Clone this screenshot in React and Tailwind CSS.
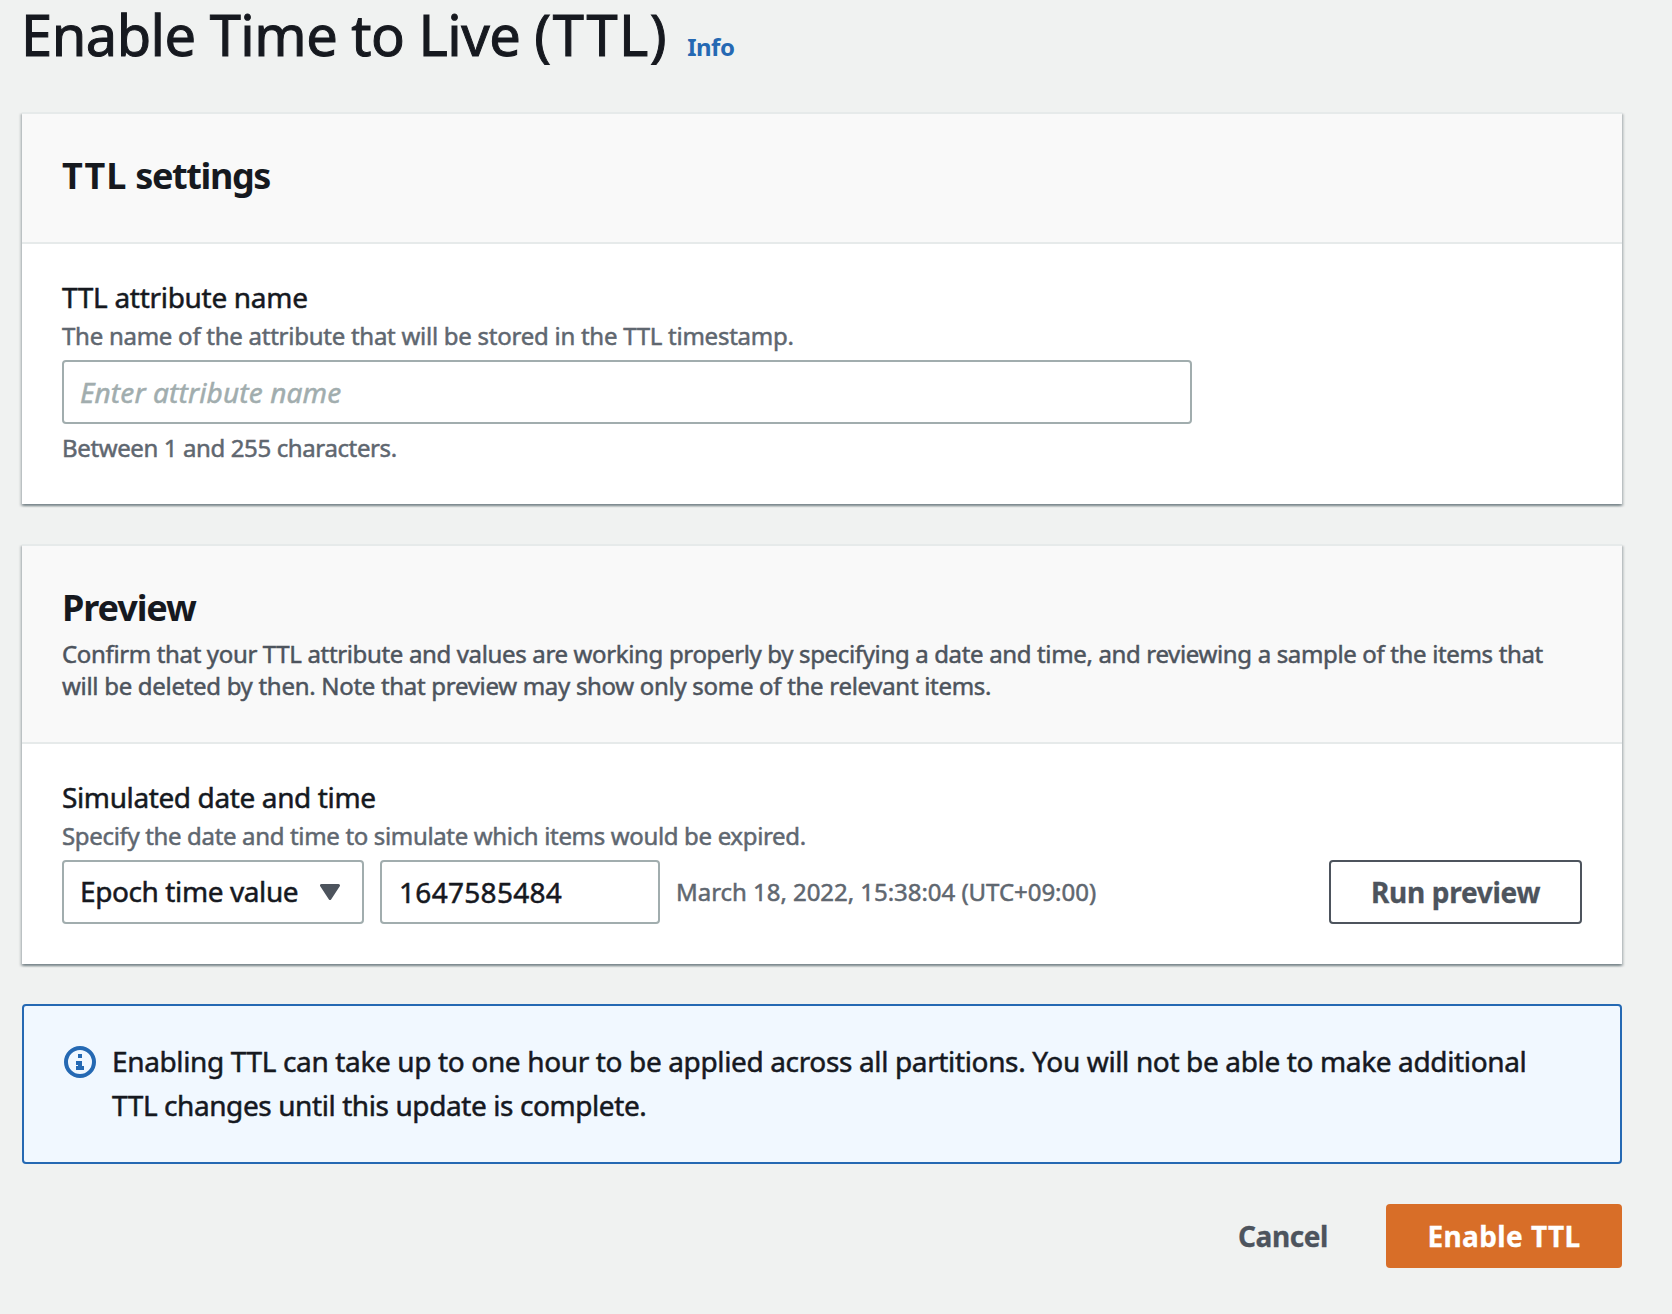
import React from "react";

const Card = ({ title, description, children }) => (
  <section className="border-t-2 border-[#e6eaea] bg-white shadow-[0_2px_2px_0_rgba(0,28,36,0.3),2px_2px_2px_0_rgba(0,28,36,0.15),-2px_2px_2px_0_rgba(0,28,36,0.15)]">
    <header className="border-b-2 border-[#e6eaea] bg-[#f9f9f9] px-10 pt-10 pb-10">
      {title}
      {description}
    </header>
    <div className="px-10 pt-[35px] pb-10">{children}</div>
  </section>
);

const InfoIcon = () => (
  <svg width="32" height="32" viewBox="0 0 32 32" className="mt-[7px] shrink-0">
    <circle cx="16" cy="16" r="14" fill="none" stroke="#2569b3" strokeWidth="4" />
    <path d="M14 8h4v4h-4zM12 15h6v5h2v4h-8v-4h2v-1h-2z" fill="#2569b3" />
  </svg>
);

export default function App() {
  return (
    <div className="min-h-[1314px] w-[1672px] bg-[#f0f2f1] pr-[50px] pl-[22px] font-['Noto_Sans','Open_Sans',sans-serif] text-[#16191f] [-webkit-text-stroke:0.5px]">
      <div className="mb-[43px] flex h-[69px] items-baseline">
        <h1 className="-ml-[1px] text-[56px] leading-[69px] font-normal tracking-[-0.5px] whitespace-nowrap [-webkit-text-stroke:1px]">
          Enable Time to Live <span className="tracking-[1.5px]">(TTL)</span>
        </h1>
        <a className="ml-[19px] text-[24px] font-bold tracking-[-0.5px] text-[#2569b3] [-webkit-text-stroke:0px]">
          Info
        </a>
      </div>

      <div className="flex flex-col gap-10">
        <Card
          title={
            <h2 className="mb-1 text-[36px] leading-[44px] font-bold tracking-[-1.4px] [-webkit-text-stroke:0px]">
              <span className="tracking-[1px]">TTL</span> settings
            </h2>
          }
        >
          <label className="block text-[28px] leading-9 tracking-[-0.3px]">
            TTL attribute name
          </label>
          <p className="mt-[5px] text-[24px] leading-8 tracking-[-0.26px] text-[#5f6770]">
            The name of the attribute that will be stored in the TTL timestamp.
          </p>
          <input
            type="text"
            placeholder="Enter attribute name"
            className="mt-2 block h-16 w-[1130px] rounded-[4px] border-2 border-[#a1adae] bg-white px-4 text-[28px] tracking-[0.13px] placeholder:text-[#a1adae] placeholder:italic"
          />
          <p className="mt-2 text-[24px] leading-8 tracking-[-0.38px] text-[#5f6770]">
            Between 1 and 255 characters.
          </p>
        </Card>

        <Card
          title={
            <h2 className="mb-1 text-[36px] leading-[44px] font-bold tracking-[-1.1px] [-webkit-text-stroke:0px]">
              Preview
            </h2>
          }
          description={
            <p className="mt-2 text-[24px] leading-8 whitespace-nowrap text-[#4d545d]">
              <span className="tracking-[-0.35px]">
                Confirm that your TTL attribute and values are working properly
                by specifying a date and time, and reviewing a sample of the
                items that
              </span>
              <br />
              <span className="tracking-[-0.3px]">
                will be deleted by then. Note that preview may show only some of
                the relevant items.
              </span>
            </p>
          }
        >
          <label className="block text-[28px] leading-9 tracking-[-0.38px]">
            Simulated date and time
          </label>
          <p className="mt-[5px] text-[24px] leading-8 tracking-[-0.34px] text-[#5f6770]">
            Specify the date and time to simulate which items would be expired.
          </p>
          <div className="mt-2 flex h-16 items-center">
            <button className="flex h-16 w-[302px] items-center justify-between rounded-[4px] border-2 border-[#a1adae] bg-white pr-[22px] pb-[2px] pl-4 text-[28px] tracking-[-0.4px]">
              Epoch time value
              <svg width="20" height="16" viewBox="0 0 20 16" className="mt-[2px]">
                <path
                  d="M1.5 1.5h17L10 14.5z"
                  fill="#4d545d"
                  stroke="#4d545d"
                  strokeWidth="3"
                  strokeLinejoin="round"
                />
              </svg>
            </button>
            <input
              type="text"
              defaultValue="1647585484"
              className="ml-4 h-16 w-[280px] rounded-[4px] border-2 border-[#a1adae] bg-white pr-4 pl-[17px] text-[28px] tracking-[0.3px]"
            />
            <span className="ml-4 text-[24px] leading-8 tracking-[-0.04px] text-[#5f6770]">
              March 18, 2022, 15:38:04 (UTC+09:00)
            </span>
            <button className="ml-auto h-16 w-[253px] rounded-[4px] border-2 border-[#4d545d] bg-white text-[28px] font-bold tracking-[-0.29px] text-[#4d545d] [-webkit-text-stroke:0.3px]">
              Run preview
            </button>
          </div>
        </Card>

        <div className="flex h-40 gap-4 rounded-[4px] border-2 border-[#2569b3] bg-[#f1f8ff] px-10 pt-[33px]">
          <InfoIcon />
          <p className="text-[28px] leading-[44px] whitespace-nowrap">
            <span className="tracking-[-0.36px]">
              Enabling TTL can take up to one hour to be applied across all
              partitions. You will not be able to make additional
            </span>
            <br />
            <span className="tracking-[-0.41px]">
              TTL changes until this update is complete.
            </span>
          </p>
        </div>

        <div className="flex h-16 items-center justify-end">
          <button className="h-16 px-[42px] text-[28px] font-bold tracking-[-0.42px] text-[#4d545d] [-webkit-text-stroke:0.3px]">
            Cancel
          </button>
          <button className="ml-4 h-16 w-[236px] rounded-[4px] bg-[#d86e28] text-[28px] font-bold tracking-[0.4px] text-white [-webkit-text-stroke:0.3px]">
            Enable TTL
          </button>
        </div>
      </div>
    </div>
  );
}
